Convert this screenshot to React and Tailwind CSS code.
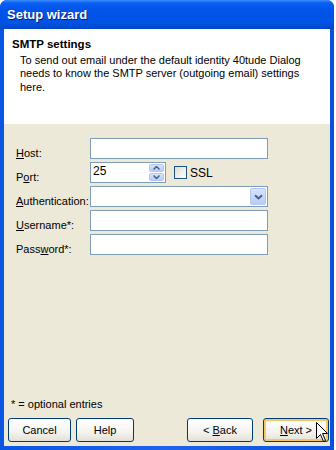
function Spin() {
  return (
    <div className="absolute right-[1px] top-[1px] bottom-[1px] w-[15px] flex flex-col gap-[1px]">
      <div className="flex-1 rounded-[2px] bg-[linear-gradient(to_bottom,#D7E3FD,#B9CCF8)] border border-[#B3C7F4] flex items-center justify-center">
        <svg width="7" height="4" viewBox="0 0 7 4"><path d="M0.5 3.5 L3.5 0.5 L6.5 3.5" fill="none" stroke="#4D6185" strokeWidth="1.5" /></svg>
      </div>
      <div className="flex-1 rounded-[2px] bg-[linear-gradient(to_bottom,#D7E3FD,#B9CCF8)] border border-[#B3C7F4] flex items-center justify-center">
        <svg width="7" height="4" viewBox="0 0 7 4"><path d="M0.5 0.5 L3.5 3.5 L6.5 0.5" fill="none" stroke="#4D6185" strokeWidth="1.5" /></svg>
      </div>
    </div>
  );
}

function Btn({ children, className = "", def = false }) {
  return (
    <div
      className={
        "h-[24px] rounded-[3px] border border-[#003C74] flex items-center justify-center bg-[linear-gradient(to_bottom,#FFFFFF_0%,#F4F3EE_60%,#E3E0D6_100%)] " +
        (def ? "shadow-[inset_0_0_0_2px_#F6C56A] " : "") +
        className
      }
    >
      {children}
    </div>
  );
}

function Label({ children }) {
  return <div className="h-[21px] flex items-end leading-[11px] whitespace-nowrap">{children}</div>;
}

export default function App() {
  return (
    <div className="w-[336px] h-[450px] bg-white">
      <div className="relative w-[334px] h-[450px] flex flex-col rounded-t-[7px] overflow-hidden bg-[linear-gradient(to_right,#0A56E4,#1E63EE_50%,#0A50DC)] font-['Liberation_Sans',Arial,sans-serif] text-[11px] text-black">
        <div className="h-[29px] shrink-0 flex items-center pl-[7px] bg-[linear-gradient(to_bottom,#3C8EFF_0%,#0A5FF0_10%,#0054E8_35%,#0053E3_80%,#0046C6_100%)]">
          <span className="text-white font-bold text-[13px] [text-shadow:1px_1px_0_#0A1E7C] leading-none">Setup wizard</span>
        </div>
        <div className="flex-1 ml-[4px] mr-[4px] mb-[4px] bg-[#ECE9D8] flex flex-col">
          <div className="h-[95px] shrink-0 bg-white pt-[8px] pl-[8px]">
            <div className="font-bold text-[11.5px] leading-[14px]">SMTP settings</div>
            <div className="mt-[3px] pl-[8px] leading-[13.4px]">
              <div className="whitespace-nowrap">To send out email under the default identity 40tude Dialog</div>
              <div className="whitespace-nowrap">needs to know the SMTP server (outgoing email) settings</div>
              <div className="whitespace-nowrap">here.</div>
            </div>
          </div>
          <div className="flex-1 pt-[14px] pl-[12px]">
            <div className="grid grid-cols-[74px_178px] gap-y-[3px]">
              <Label><span><span className="underline">H</span>ost:</span></Label>
              <div className="h-[21px] bg-white border border-[#7F9DB9]" />

              <Label><span>P<span className="underline">o</span>rt:</span></Label>
              <div className="h-[21px] flex items-center">
                <div className="relative h-[21px] w-[76px] bg-white border border-[#7F9DB9] text-[12px] leading-none pl-[2px] pt-[2px]">
                  25
                  <Spin />
                </div>
                <div className="ml-[8px] w-[13px] h-[13px] border border-[#1C5180] bg-[linear-gradient(135deg,#DCDCD7,#FFFFFF)]" />
                <span className="ml-[3px] text-[12px]">SSL</span>
              </div>

              <Label><span><span className="underline">A</span>uthentication:</span></Label>
              <div className="relative h-[21px] bg-white border border-[#7F9DB9]">
                <div className="absolute right-[1px] top-[1px] bottom-[1px] w-[16px] rounded-[2px] bg-[linear-gradient(to_bottom,#D7E3FD,#B9CCF8)] border border-[#B3C7F4] flex items-center justify-center">
                  <svg width="9" height="6" viewBox="0 0 9 6"><path d="M1 1.2 L4.5 4.5 L8 1.2" fill="none" stroke="#4D6185" strokeWidth="2" /></svg>
                </div>
              </div>

              <Label><span><span className="underline">U</span>sername*:</span></Label>
              <div className="h-[21px] bg-white border border-[#7F9DB9]" />

              <Label><span>Pass<span className="underline">w</span>ord*:</span></Label>
              <div className="h-[21px] bg-white border border-[#7F9DB9]" />
            </div>
          </div>
          <div className="pl-[7px] leading-[14px] mb-[7px]">* = optional entries</div>
          <div className="flex items-center pl-[4px] pr-[1px] pb-[4px]">
            <Btn className="w-[63px]">Cancel</Btn>
            <Btn className="w-[58px] ml-[5px]">Help</Btn>
            <div className="flex-1" />
            <Btn className="w-[66px]">&lt; <span className="underline ml-[3px]">B</span>ack</Btn>
            <Btn className="w-[66px] ml-[10px]" def><span className="underline">N</span>ext &gt;</Btn>
          </div>
        </div>
        <svg className="absolute left-[316px] top-[422px]" width="13" height="21" viewBox="0 0 13 21">
          <path d="M0.5 0.5 L0.5 16.5 L4.5 12.5 L7.5 19.5 L9.5 18.5 L6.5 11.5 L11.5 11.5 Z" fill="white" stroke="black" strokeWidth="1" strokeLinejoin="miter" />
        </svg>
      </div>
    </div>
  );
}
